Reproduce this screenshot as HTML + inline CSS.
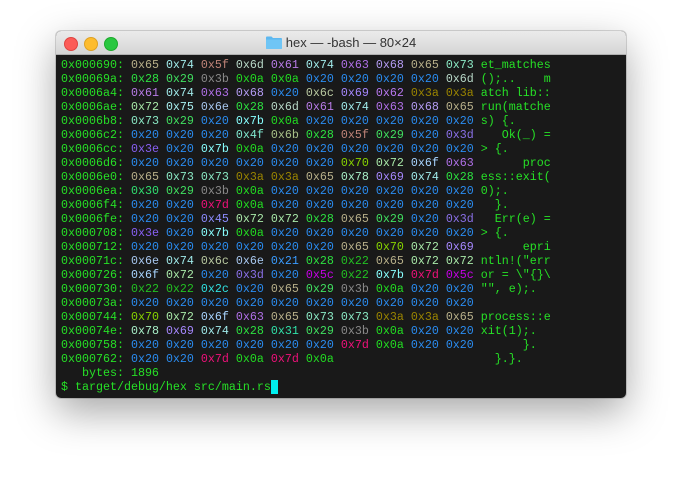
<!DOCTYPE html>
<html><head><meta charset="utf-8"><style>
body{margin:0;width:682px;height:479px;background:#fff;overflow:hidden;position:relative;font-family:"Liberation Sans",sans-serif}
#win{position:absolute;left:56px;top:31px;width:570px;height:367px;border-radius:5px;background:#191919;box-shadow:0 14px 40px rgba(0,0,0,.35),0 0 0 1px rgba(0,0,0,.15);overflow:hidden}
#tb{position:absolute;left:0;top:0;width:570px;height:23px;background:linear-gradient(#ebebeb,#d5d5d5);border-bottom:1px solid #b0b0b0}
.l{position:absolute;top:6px;width:12px;height:12px;border-radius:50%}
#title{position:absolute;left:0;width:570px;top:4px;text-align:center;font-size:13px;color:#333}
#t{position:absolute;left:5px;top:27px;font-family:"Liberation Mono",monospace;font-size:11.67px;line-height:14px;white-space:pre;color:#26e026}
.cur{background:#00f0f0}
</style></head><body>
<div id="win"><div id="tb">
<div class="l" style="left:8px;background:#fc5b57;border:0.5px solid #de4440"></div>
<div class="l" style="left:28px;background:#fdbc2e;border:0.5px solid #dea123"></div>
<div class="l" style="left:48px;background:#29c740;border:0.5px solid #1daa2c"></div>
<div id="title"><svg width="16" height="13" viewBox="0 0 16 13" style="vertical-align:-2px;margin-right:4px"><path d="M0 1.5Q0 0.5 1 0.5H5.5L7 2H15Q16 2 16 3V12Q16 13 15 13H1Q0 13 0 12Z" fill="#5db8f0"/><path d="M0 3.5H16V12Q16 13 15 13H1Q0 13 0 12Z" fill="#6fc5f5"/></svg>hex — -bash — 80×24</div>
</div><div id="t"></div></div>
<script>
var C={"20":"#2a8cf0","0a":"#22dd22","7d":"#f0107a","3b":"#8a8a8a","3a":"#9a8400","61":"#b87ce8","74":"#a0eaea","65":"#b8b08a","5f":"#c08478","6d":"#b8d8c8","63":"#b070e8","68":"#b49cf4","73":"#8ae8c4","28":"#2ce040","29":"#40e060","6c":"#b8c8a0","69":"#a688ff","62":"#b878f0","72":"#a8e8a8","75":"#a8f0f0","6e":"#a8c8f0","7b":"#88ffff","4f":"#80e8d0","6b":"#a8c088","3d":"#8a70e8","3e":"#8860f4","70":"#88d400","6f":"#a8d4ff","78":"#a8f0c8","30":"#30e070","45":"#8c8cff","21":"#3a9cff","5c":"#c400e4","22":"#22c022","2c":"#30e0e0","31":"#30e0a8"};
var R=[[0x690,"65 74 5f 6d 61 74 63 68 65 73"],[0x69a,"28 29 3b 0a 0a 20 20 20 20 6d"],[0x6a4,"61 74 63 68 20 6c 69 62 3a 3a"],[0x6ae,"72 75 6e 28 6d 61 74 63 68 65"],[0x6b8,"73 29 20 7b 0a 20 20 20 20 20"],[0x6c2,"20 20 20 4f 6b 28 5f 29 20 3d"],[0x6cc,"3e 20 7b 0a 20 20 20 20 20 20"],[0x6d6,"20 20 20 20 20 20 70 72 6f 63"],[0x6e0,"65 73 73 3a 3a 65 78 69 74 28"],[0x6ea,"30 29 3b 0a 20 20 20 20 20 20"],[0x6f4,"20 20 7d 0a 20 20 20 20 20 20"],[0x6fe,"20 20 45 72 72 28 65 29 20 3d"],[0x708,"3e 20 7b 0a 20 20 20 20 20 20"],[0x712,"20 20 20 20 20 20 65 70 72 69"],[0x71c,"6e 74 6c 6e 21 28 22 65 72 72"],[0x726,"6f 72 20 3d 20 5c 22 7b 7d 5c"],[0x730,"22 22 2c 20 65 29 3b 0a 20 20"],[0x73a,"20 20 20 20 20 20 20 20 20 20"],[0x744,"70 72 6f 63 65 73 73 3a 3a 65"],[0x74e,"78 69 74 28 31 29 3b 0a 20 20"],[0x758,"20 20 20 20 20 20 7d 0a 20 20"],[0x762,"20 20 7d 0a 7d 0a"]];
var h="";
R.forEach(function(r){var a=r[0].toString(16);while(a.length<6)a="0"+a;h+="0x"+a+": ";var b=r[1].split(" "),s="";
for(var i=0;i<10;i++){if(i<b.length){h+='<span style="color:'+C[b[i]]+'">0x'+b[i]+'</span> ';var c=parseInt(b[i],16);s+=c==10?".":String.fromCharCode(c).replace("&","&amp;").replace("<","&lt;");}else h+="     ";}
h+=s+"\n";});
h+="   bytes: 1896\n$ target/debug/hex src/main.rs<span class='cur'> </span>";
document.getElementById("t").innerHTML=h;
</script>
</body></html>
